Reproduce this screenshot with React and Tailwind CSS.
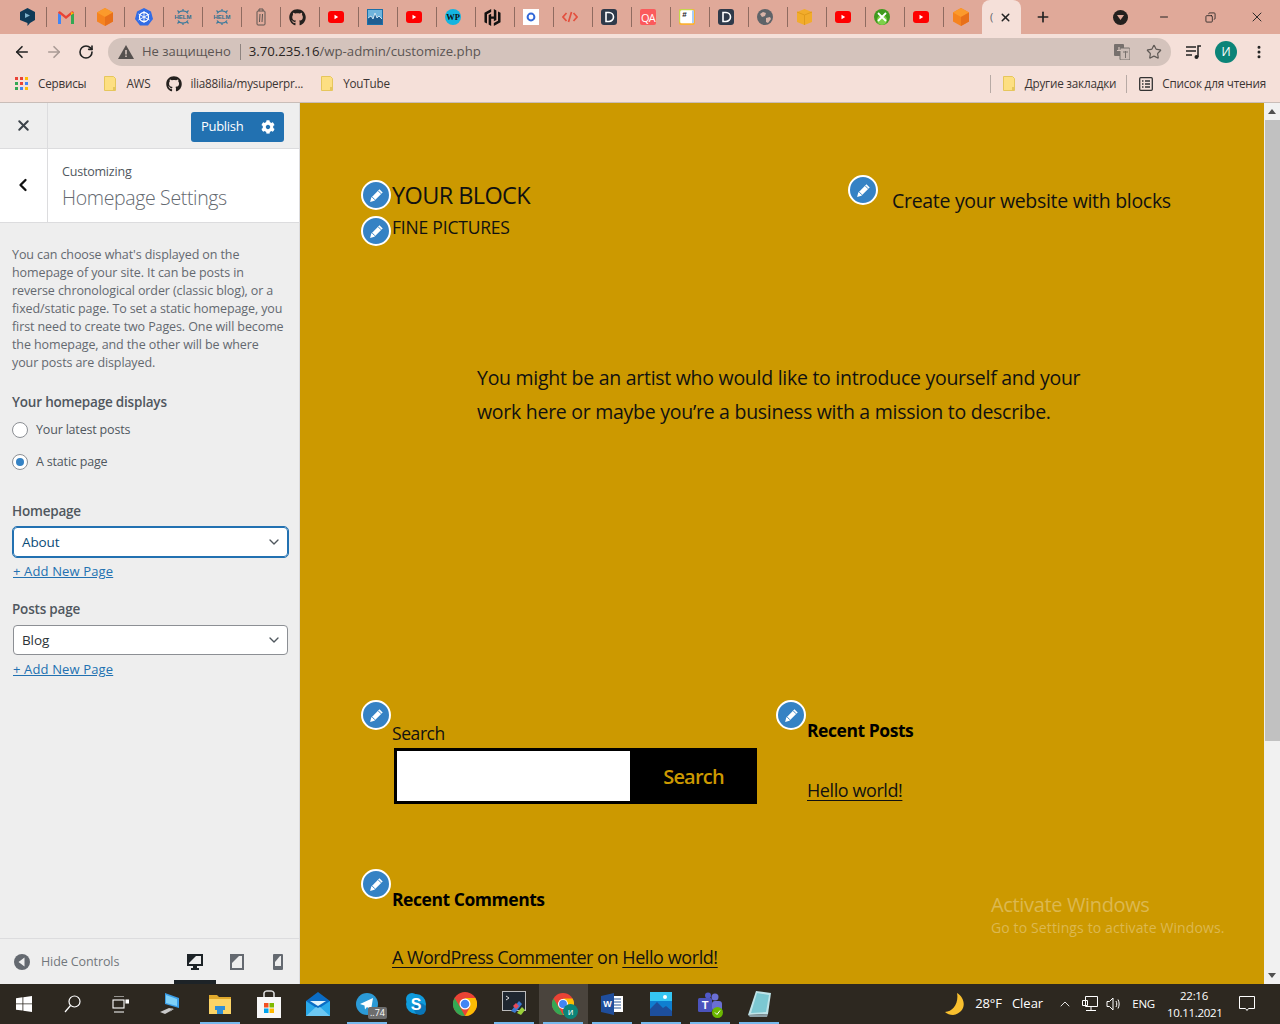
import React from 'react';
import { FaGithub, FaCog } from 'react-icons/fa';
import { SiHashicorp } from 'react-icons/si';
import { ArrowLeft, ArrowRight, RotateCw, Star, X, Plus, ChevronLeft, ChevronDown, ChevronUp, Minus, Copy, MoreVertical } from 'lucide-react';

const Yt = () => (
  <svg width="16" height="12" viewBox="0 0 16 12"><rect width="16" height="12" rx="3" fill="#f00" /><path d="M6.5 3.8v4.4L10.2 6z" fill="#fff" /></svg>
);
const Cube = () => (
  <svg width="16" height="18" viewBox="0 0 16 18"><path d="M8 0l8 4.5v9L8 18l-8-4.5v-9z" fill="#f5831f" /><path d="M8 0l8 4.5L8 9 0 4.5z" fill="#fb9a2c" /><path d="M8 9l8-4.5v9L8 18z" fill="#e8701a" /></svg>
);
const Helm = () => (
  <svg width="18" height="18" viewBox="0 0 18 18" fill="none" stroke="#3a7a9c" strokeWidth="1.200">
    <path d="M4 5.500a6 6 0 0 1 10 0M4 12.500a6 6 0 0 0 10 0M9 1v2.500M9 14.500V17M3.500 2.500l2 2.200M14.500 2.500l-2 2.200M3.500 15.500l2-2.200M14.500 15.500l-2-2.200" />
    <text x="9" y="11" textAnchor="middle" fontSize="6" fontWeight="700" fill="#2f6e90" stroke="none" fontFamily="Liberation Sans, sans-serif">HELM</text>
  </svg>
);
const DarkD = () => (
  <svg width="16" height="16" viewBox="0 0 16 16"><rect width="16" height="16" rx="3" fill="#2f3a4a" /><path d="M5 3.500h3a4.500 4.500 0 0 1 0 9H5z" fill="none" stroke="#fff" strokeWidth="1.600" /></svg>
);
const favicons = [
  <svg width="15" height="18" viewBox="0 0 15 18"><path d="M7.500 0L15 4v8l-5 3-2.500 3v-3L0 12V4z" fill="#0f3a57" /><path d="M5 5l5 2.500L5 10zM5 11l3-1" fill="#7fb2cc" /></svg>,
  <svg width="16" height="13" viewBox="0 0 16 13"><path d="M0 13V2l3 2v9z" fill="#4285f4" /><path d="M16 13V2l-3 2v9z" fill="#34a853" /><path d="M0 2c.5-2 2-2 3-1l5 4 5-4c1-1 2.500-1 3 1l-3 2-5 4-5-4z" fill="#ea4335" /><path d="M13 1l3 1-3 2z" fill="#fbbc04" /></svg>,
  <Cube />,
  <svg width="18" height="18" viewBox="0 0 18 18"><path d="M9 0l7 3.400L18 11l-5 6.500H5L0 11l2-7.600z" fill="#326ce5" /><circle cx="9" cy="9" r="4.500" fill="none" stroke="#fff" strokeWidth="1.300" /><path d="M9 3v12M3.500 6l11 6M14.500 6l-11 6" stroke="#fff" strokeWidth=".9" /></svg>,
  <Helm />,
  <Helm />,
  <svg width="10" height="18" viewBox="0 0 10 18" fill="none" stroke="#5c5450" strokeWidth="1"><rect x="1" y="3" width="8" height="14" rx="1" /><path d="M3 3V1h4v2M4 6l-.5 8M6.500 6L6 14" /></svg>,
  <FaGithub size={17} color="#24201e" />,
  <Yt />,
  <svg width="16" height="16" viewBox="0 0 16 16"><rect width="16" height="16" fill="#1b6fa8" /><rect x="1" y="1" width="14" height="14" fill="#6fb4dc" /><path d="M1 15V9l3-2 2 3 2-6 2 5 2-2 3 3v5z" fill="#1f5d91" /><path d="M1 9l3-2 2 3 2-6 2 5 2-2 3 3" fill="none" stroke="#e8f4fb" strokeWidth=".8" /></svg>,
  <Yt />,
  <svg width="16" height="16" viewBox="0 0 16 16"><circle cx="8" cy="8" r="8" fill="#14b4e0" /><text x="8" y="11" textAnchor="middle" fontSize="8.500" fontWeight="700" fill="#111" fontFamily="Liberation Serif, serif">WP</text></svg>,
  <SiHashicorp size={17} color="#111" />,
  <svg width="16" height="16" viewBox="0 0 16 16"><rect width="16" height="16" fill="#fff" /><circle cx="8" cy="8" r="3.400" fill="none" stroke="#3268d8" strokeWidth="2" /></svg>,
  <svg width="16" height="12" viewBox="0 0 16 12" fill="none" stroke="#e3503e" strokeWidth="1.700"><path d="M4.500 2L1 6l3.500 4M11.500 2L15 6l-3.500 4M9.500 1L6.500 11" /></svg>,
  <DarkD />,
  <div className="flex h-[16px] w-[16px] items-center justify-center rounded-[2px] bg-[#fb5a5c] font-['Open_Sans',sans-serif] text-[11px] leading-none tracking-[-0.8px] text-white">QA</div>,
  <svg width="16" height="16" viewBox="0 0 16 16"><rect width="16" height="16" rx="2" fill="#fbb034" /><rect x="0" y="0" width="14" height="14" rx="2" fill="#c5d84b" /><rect x="1.200" y="1.200" width="13.600" height="13" rx="1.500" fill="#fff" /><rect x="13" y="1.500" width="2" height="12.500" fill="#a7cdf6" /><text x="5.500" y="8" textAnchor="middle" fontSize="8" fontWeight="700" fill="#222" fontFamily="Liberation Sans, sans-serif">#</text></svg>,
  <DarkD />,
  <svg width="16" height="16" viewBox="0 0 16 16"><circle cx="8" cy="8" r="8" fill="#5f6368" /><path d="M3 5l3-2 3 1-1 3-3 1zM9 9l4-1 1 2-3 4-2-1z" fill="#d9b3a7" /></svg>,
  <svg width="15" height="16" viewBox="0 0 15 16"><path d="M7.500 0L15 3v10l-7.500 3L0 13V3z" fill="#f2ac2b" /><path d="M7.500 6v10" stroke="#e09a1c" /><path d="M0 3l7.500 3L15 3" fill="none" stroke="#e09a1c" /></svg>,
  <Yt />,
  <svg width="16" height="16" viewBox="0 0 16 16"><circle cx="8" cy="8" r="8" fill="#3f9a1f" /><circle cx="8" cy="11" r="5" fill="#7fd04a" /><path d="M4 4l8 8M12 4l-8 8" stroke="#fff" strokeWidth="1.800" /></svg>,
  <Yt />,
  <Cube />,
];

const EditBtn = ({ className }) => (
  <span className={`absolute flex h-[30px] w-[30px] items-center justify-center rounded-full border-2 border-white bg-[#3582c4] ${className}`}>
    <svg width="17" height="17" viewBox="0 0 16 16" fill="none"><path d="M10.800 2.200l3 3-7.800 7.800-4 1 1-4z" fill="#fff" /><path d="M9.600 3.600l2.800 2.800M4 9.500L6.500 12" stroke="#3582c4" strokeWidth=".9" /></svg>
  </span>
);

const Radio = ({ checked, label, className }) => (
  <div className={`flex items-center ${className}`}>
    <span className="flex h-[16px] w-[16px] items-center justify-center rounded-full border border-[#8c8f94] bg-white">
      {checked && <span className="h-[8px] w-[8px] rounded-full bg-[#3582c4]" />}
    </span>
    <span className="ml-[8px] text-[12.500px] leading-[16px] tracking-[-0.18px] text-[#50575e]">{label}</span>
  </div>
);

const SelectBox = ({ value, active }) => (
  <div className={`ml-[1px] flex h-[30px] w-[275px] items-center justify-between rounded-[4px] bg-white pl-[8px] pr-[5px] text-[13.500px] tracking-[-0.1px] ${active ? 'outline outline-1 outline-[#2271b1] border border-[#2271b1] text-[#0a4b78]' : 'border border-[#8c8f94] text-[#2c3338]'}`}>
    <span>{value}</span>
    <ChevronDown size={16} strokeWidth={2} color="#50575e" />
  </div>
);

const AddLink = ({ className }) => (
  <a className={`ml-[1px] block text-[13px] leading-[18px] tracking-[0.14px] text-[#2271b1] underline ${className}`}>+ Add New Page</a>
);

const sectionLabel = 'text-[13.500px] font-semibold leading-[18px] tracking-[-0.2px] text-[#50575e]';

const Sidebar = () => (
  <aside className="flex w-[300px] shrink-0 flex-col border-r border-[#dcdcde] bg-[#eeeeee] font-['Open_Sans',sans-serif]">
    <div className="flex h-[46px] shrink-0 items-center border-b border-[#dcdcde]">
      <div className="flex h-full w-[48px] items-center justify-center border-r border-[#dcdcde]">
        <X size={17} strokeWidth={2.800} color="#3c434a" />
      </div>
      <div className="ml-[143px] mt-[2px] flex h-[30px] w-[93px] items-center rounded-[3px] bg-[#2271b1] text-white">
        <span className="w-[63px] pl-[10px] pt-[1px] text-[13px] tracking-[-0.3px]">Publish</span>
        <FaCog size={14} color="#fff" className="ml-[7px]" />
      </div>
    </div>
    <div className="flex h-[74px] shrink-0 border-b border-[#dcdcde] bg-white">
      <div className="flex w-[48px] items-center justify-center border-r border-[#dcdcde] pb-[2px] pr-[1px]">
        <ChevronLeft size={20} strokeWidth={2.800} color="#111" />
      </div>
      <div className="pl-[14px] pt-[14px]">
        <div className="text-[12.500px] leading-[18px] tracking-[-0.2px] text-[#50575e]">Customizing</div>
        <div className="mt-[4px] text-[19.500px] font-light leading-[26px] tracking-[-0.35px] text-[#646970]">Homepage Settings</div>
      </div>
    </div>
    <div className="flex-1 px-[12px] pt-[23px]">
      <p className="w-[285px] text-[12.500px] leading-[18px] tracking-[-0.1px] text-[#646970]">
        You can choose what's displayed on the<br />homepage of your site. It can be posts in<br />reverse chronological order (classic blog), or a<br />fixed/static page. To set a static homepage, you<br />first need to create two Pages. One will become<br />the homepage, and the other will be where<br />your posts are displayed.
      </p>
      <div className={`mt-[21px] ${sectionLabel}`}>Your homepage displays</div>
      <Radio label="Your latest posts" className="mt-[11px]" />
      <Radio checked label="A static page" className="mt-[16px]" />
      <div className={`mt-[32px] ${sectionLabel}`}>Homepage</div>
      <div className="mt-[7px]"><SelectBox value="About" active /></div>
      <AddLink className="mt-[5px]" />
      <div className={`mt-[20px] ${sectionLabel}`}>Posts page</div>
      <div className="mt-[7px]"><SelectBox value="Blog" /></div>
      <AddLink className="mt-[5px]" />
    </div>
    <div className="relative flex h-[46px] shrink-0 items-center border-t border-[#dcdcde] pl-[14px] pt-[1px]">
      <span className="flex h-[16px] w-[16px] items-center justify-center rounded-full bg-[#646970]">
        <svg width="8" height="10" viewBox="0 0 8 10"><path d="M6.500 0.500v9L0.500 5z" fill="#eee" /></svg>
      </span>
      <span className="ml-[11px] text-[12.500px] tracking-[-0.1px] text-[#72777c]">Hide Controls</span>
      <svg className="absolute left-[187px] top-[15px]" width="16" height="16" viewBox="0 0 16 16"><path fillRule="evenodd" d="M0 0h16v12H10v2h2v2H4v-2h2v-2H0zM2 2v8h12V2z" fill="#1d2327" /><path d="M2 2h7L2 9z" fill="#1d2327" /></svg>
      <svg className="absolute left-[230px] top-[15px]" width="14" height="16" viewBox="0 0 14 16"><path fillRule="evenodd" d="M0 0h14v16H0zM2 2v12h10V2z" fill="#646970" /><path d="M2 2h7L2 9z" fill="#646970" /></svg>
      <svg className="absolute left-[273px] top-[15px]" width="10" height="16" viewBox="0 0 10 16"><path fillRule="evenodd" d="M0 1a1 1 0 0 1 1-1h8a1 1 0 0 1 1 1v14a1 1 0 0 1-1 1H1a1 1 0 0 1-1-1zM2 2v10h6V2z" fill="#646970" /><path d="M2 2h5L2 8z" fill="#646970" /></svg>
      <span className="absolute bottom-0 left-[174px] h-[4px] w-[42px] bg-[#1d2327]" />
    </div>
  </aside>
);

const linkCls = 'underline decoration-1 underline-offset-[3px]';

const Preview = () => (
  <main className="relative flex-1 overflow-hidden bg-[#cc9900] pl-[92px] pt-[76px] font-['Open_Sans',sans-serif] text-[#111]">
    <div className="flex">
      <div className="w-[500px]">
        <div className="relative text-[23.500px] leading-[32px] tracking-[-0.6px]">
          <EditBtn className="-left-[31px] top-[1px]" />YOUR BLOCK
        </div>
        <div className="relative mt-[2px] text-[17.500px] leading-[28px] tracking-[-0.2px]">
          <EditBtn className="-left-[31px] top-[3px]" />FINE PICTURES
        </div>
      </div>
      <div className="relative mt-[6px] h-[32px] text-[19.500px] leading-[32px] tracking-[-0.3px]">
        <EditBtn className="-left-[44px] -top-[10px]" />Create your website with blocks
      </div>
    </div>
    <p className="ml-[85px] mt-[120px] text-[19.500px] leading-[34px] tracking-[-0.27px]">
      You might be an artist who would like to introduce yourself and your<br />work here or maybe you’re a business with a mission to describe.
    </p>
    <div className="mt-[289px] flex">
      <div className="w-[415px]">
        <div className="relative text-[17.500px] leading-[30px] tracking-[-0.42px]">
          <EditBtn className="-left-[31px] -top-[18px]" />Search
        </div>
        <div className="ml-[2px] flex h-[56px] w-[363px] border-[3px] border-black bg-black">
          <div className="w-[233px] bg-white" />
          <div className="flex-1 pl-[3px] text-center text-[20px] font-semibold leading-[51px] tracking-[-0.8px] text-[#cc9900]">Search</div>
        </div>
      </div>
      <div>
        <div className="relative text-[17.500px] font-bold leading-[24px] tracking-[-0.45px] text-black">
          <EditBtn className="-left-[31px] -top-[18px]" />Recent Posts
        </div>
        <div className="mt-[34px] text-[18px] leading-[28px] tracking-[-0.42px]"><a className={linkCls}>Hello world!</a></div>
      </div>
    </div>
    <div className="relative mt-[83px] text-[17.500px] font-bold leading-[24px] tracking-[-0.45px] text-black">
      <EditBtn className="-left-[31px] -top-[18px]" />Recent Comments
    </div>
    <div className="mt-[32px] text-[18px] leading-[28px] tracking-[-0.42px]">
      <a className={`${linkCls} tracking-[-0.56px]`}>A WordPress Commenter</a> on <a className={linkCls}>Hello world!</a>
    </div>
    <div className="absolute left-[691px] top-[788px] text-[#dcb850]">
      <div className="text-[20px] leading-[28px] tracking-[-0.35px]">Activate Windows</div>
      <div className="text-[14px] leading-[18px] tracking-[0.12px]">Go to Settings to activate Windows.</div>
    </div>
  </main>
);

const Scrollbar = () => (
  <div className="flex w-[16px] shrink-0 flex-col items-center bg-[#f1f1f1]">
    <div className="flex h-[17px] items-center justify-center"><svg width="8" height="5" viewBox="0 0 8 5"><path d="M4 0l4 5H0z" fill="#505050" /></svg></div>
    <div className="h-[621px] w-[15px] bg-[#c1c1c1]" />
    <div className="flex-1" />
    <div className="flex h-[17px] items-center justify-center"><svg width="8" height="5" viewBox="0 0 8 5"><path d="M4 5l4-5H0z" fill="#505050" /></svg></div>
  </div>
);

const TabStrip = () => (
  <div className="flex h-[34px] shrink-0 items-center bg-[#e0a999] pl-[8px] font-['Open_Sans',sans-serif]">
    {favicons.map((ic, i) => (
      <div key={i} className={`flex h-[20px] w-[39px] shrink-0 items-center justify-center ${i < favicons.length - 1 ? 'border-r border-[#8f6b60]' : ''} ${i >= 7 ? 'pr-[6px]' : ''}`}>{ic}</div>
    ))}
    <div className="-ml-[1px] flex h-[34px] w-[39px] shrink-0 items-center rounded-t-[8px] bg-[#f5e0d9] pl-[8px]">
      <span className="text-[11px] text-[#5f6368]">(</span>
      <X size={13} strokeWidth={2.800} color="#222" className="ml-[6px]" />
    </div>
    <Plus size={16} strokeWidth={2.500} color="#222" className="ml-[14px]" />
    <span className="ml-[62px] flex h-[15px] w-[15px] items-center justify-center rounded-full bg-[#24201e]">
      <svg width="7" height="5" viewBox="0 0 7 5"><path d="M0 0h7L3.500 5z" fill="#e0a999" /></svg>
    </span>
    <Minus size={12} strokeWidth={2} color="#222" className="ml-[30px]" />
    <Copy size={11} strokeWidth={1.800} color="#222" className="ml-[35px] -scale-x-100" />
    <X size={16} strokeWidth={1.400} color="#222" className="ml-[33px]" />
  </div>
);

const Toolbar = () => (
  <div className="flex h-[36px] shrink-0 items-center bg-[#f5e0d9] font-['Open_Sans',sans-serif]">
    <ArrowLeft size={18} strokeWidth={2.200} color="#222" className="ml-[13px]" />
    <ArrowRight size={18} strokeWidth={2.200} color="#a99a95" className="ml-[14px]" />
    <RotateCw size={16} strokeWidth={2.400} color="#222" className="ml-[15px]" />
    <div className="ml-[14px] flex h-[28px] w-[1063px] items-center rounded-full bg-[#d4c3bc] pl-[10px]">
      <svg width="16" height="14" viewBox="0 0 16 14"><path d="M8 0l8 14H0z" fill="#55504e" /><path d="M7.200 5h1.600v4.500H7.200zM7.200 10.500h1.600V12H7.200z" fill="#d4c3bc" /></svg>
      <span className="ml-[8px] text-[13px] text-[#5b5553]">Не защищено</span>
      <span className="ml-[9px] h-[16px] w-px bg-[#8e8480]" />
      <span className="ml-[8px] text-[13.200px] text-[#5b5553]"><span className="text-[#2a2523]">3.70.235.16</span>/wp-admin/customize.php</span>
      <svg className="ml-auto" width="16" height="16" viewBox="0 0 16 16"><rect x="0" y="0" width="10" height="12" rx="1" fill="#77706d" /><rect x="6" y="4" width="10" height="12" rx="1" fill="#cbbcb6" stroke="#77706d" /><path d="M3 6.500h4M5 3v4" stroke="#d4c3bc" strokeWidth="1.200" /><path d="M9 8h5M11.500 7v7" stroke="#77706d" /></svg>
      <Star size={16} strokeWidth={1.800} color="#5f5955" className="ml-[16px] mr-[9px]" />
    </div>
    <svg className="ml-[15px]" width="15" height="14" viewBox="0 0 15 14"><path d="M0 2h10M0 6h10M0 10h6" stroke="#222" strokeWidth="1.500" /><path d="M12 12V1h3" stroke="#222" strokeWidth="1.500" fill="none" /><circle cx="10.500" cy="12" r="2" fill="#222" /></svg>
    <span className="ml-[14px] flex h-[22px] w-[22px] items-center justify-center rounded-full bg-[#0b8478] text-[12px] text-white">И</span>
    <MoreVertical size={16} strokeWidth={2.500} color="#222" className="ml-[14px]" />
  </div>
);

const Folder = ({ className }) => (
  <svg className={className} width="12" height="15" viewBox="0 0 12 15"><path d="M0.500 0.500h9l2 2v12h-11z" fill="#fddf82" stroke="#e6c65c" /><rect x="9" y="11" width="2" height="3" fill="#e6c65c" /></svg>
);

const Bookmarks = () => (
  <div className="flex h-[33px] shrink-0 items-center border-b border-[#c9bdb8] bg-[#f5e0d9] pb-[5px] pl-[15px] font-['Open_Sans',sans-serif] text-[11.700px] tracking-[-0.2px] text-[#3b3533]">
    <svg width="13" height="13" viewBox="0 0 13 13">
      {[['#ea4335', '#ea4335', '#fbbc04'], ['#34a853', '#ea4335', '#4285f4'], ['#34a853', '#4285f4', '#fbbc04']].flatMap((row, y) => row.map((c, x) => <rect key={`${x}${y}`} x={x * 5} y={y * 5} width="3" height="3" fill={c} />))}
    </svg>
    <span className="ml-[10px]">Сервисы</span>
    <Folder className="ml-[18px]" />
    <span className="ml-[10px]">AWS</span>
    <FaGithub size={16} color="#24201e" className="ml-[16px]" />
    <span className="ml-[8px]">ilia88ilia/mysuperpr...</span>
    <Folder className="ml-[18px]" />
    <span className="ml-[10px]">YouTube</span>
    <span className="ml-auto h-[18px] w-px bg-[#b7aaa5]" />
    <Folder className="ml-[12px]" />
    <span className="ml-[10px]">Другие закладки</span>
    <span className="ml-[10px] h-[18px] w-px bg-[#b7aaa5]" />
    <svg className="ml-[12px]" width="14" height="14" viewBox="0 0 14 14" fill="none" stroke="#333" strokeWidth="1.300"><rect x=".7" y=".7" width="12.600" height="12.600" rx="1" /><path d="M3 4h1.500M6 4h5M3 7h1.500M6 7h5M3 10h1.500M6 10h5" /></svg>
    <span className="ml-[9px] mr-[14px]">Список для чтения</span>
  </div>
);

const ChromeLogo = ({ size }) => (
  <svg width={size} height={size} viewBox="0 0 24 24"><circle cx="12" cy="12" r="12" fill="#ea4335" /><path d="M12 24a12 12 0 0 1-10.400-18L7 15l5 9z" fill="#34a853" /><path d="M12 6h10.400A12 12 0 0 1 12 24l5-9z" fill="#fbbc04" /><circle cx="12" cy="12" r="5.500" fill="#fff" /><circle cx="12" cy="12" r="4.300" fill="#4285f4" /></svg>
);

const tbIcons = [
  <svg width="26" height="24" viewBox="0 0 26 24"><path d="M7 1l14 5v10L7 12z" fill="#3a9ee8" /><path d="M8 3l11 4v7L8 11z" fill="#7fd0f7" /><path d="M2 20l9-4 5 1-9 5z" fill="#c9c9c9" /><path d="M14 16v2l-2 1" stroke="#999" fill="none" /></svg>,
  <svg width="22" height="20" viewBox="0 0 22 20"><path d="M0 1h8l2 2h12v3H0z" fill="#e0a92c" /><path d="M0 5h22v15H0z" fill="#fbd466" /><path d="M6 16v-4h10v4h-2v4H8v-4z" fill="#2f8fd8" /></svg>,
  <svg width="24" height="28" viewBox="0 0 24 28"><path d="M7 7V3a3 3 0 0 1 3-2h4a3 3 0 0 1 3 2v4" fill="none" stroke="#ddd" strokeWidth="1.600" /><rect y="7" width="24" height="21" fill="#f7f7f7" /><rect x="7" y="13" width="4.500" height="4.500" fill="#f25022" /><rect x="12.500" y="13" width="4.500" height="4.500" fill="#7fba00" /><rect x="7" y="18.500" width="4.500" height="4.500" fill="#00a4ef" /><rect x="12.500" y="18.500" width="4.500" height="4.500" fill="#ffb900" /></svg>,
  <svg width="24" height="24" viewBox="0 0 24 24"><path d="M0 9L12 0l12 9v15H0z" fill="#0a6cc4" /><path d="M0 9l12 8 12-8v15H0z" fill="#29a9ea" /><path d="M4 9h16l-8 5z" fill="#e0f2fc" /><path d="M0 24l10-9 2 1 2-1 10 9z" fill="#6dc8f3" /></svg>,
  <div className="relative"><svg width="22" height="22" viewBox="0 0 22 22"><circle cx="11" cy="11" r="11" fill="#2b9ad6" /><path d="M4 11l13-6-2 12-4-3-2 2.500-.5-4z" fill="#fff" /></svg><span className="absolute -right-[9px] top-[14px] rounded-[2px] bg-[#6d6d6d] px-[2px] font-['Open_Sans',sans-serif] text-[9px] leading-[12px] text-white">..74</span></div>,
  <svg width="22" height="24" viewBox="0 0 22 24"><circle cx="11" cy="12" r="10" fill="#0f9bdc" /><circle cx="7" cy="7" r="6" fill="#0f9bdc" /><circle cx="15" cy="17" r="6" fill="#0a76b8" /><text x="11" y="18" textAnchor="middle" fontSize="16" fontWeight="700" fill="#fff" fontFamily="Liberation Sans, sans-serif">S</text></svg>,
  <ChromeLogo size={24} />,
  <svg width="24" height="26" viewBox="0 0 24 26"><rect width="24" height="20" fill="#bbb" /><rect x="1" y="1" width="22" height="18" fill="#1f2730" /><path d="M4 5l3 2-3 2" stroke="#ddd" fill="none" /><path d="M9 20l8-10 3 3-7 9z" fill="#3a78d0" /><path d="M15 22l5-6 3 3-4 5z" fill="#9ad03a" /><path d="M11 15l3-3 3 3-3 3z" fill="#e84a5a" /></svg>,
  <div className="relative"><ChromeLogo size={22} /><span className="absolute -bottom-[4px] -right-[4px] flex h-[15px] w-[15px] items-center justify-center rounded-full bg-[#0b8478] font-['Open_Sans',sans-serif] text-[9px] text-white">и</span></div>,
  <svg width="22" height="22" viewBox="0 0 22 22"><rect x="9" y="3" width="13" height="16" fill="#fff" /><path d="M12 6h8M12 9h8M12 12h8M12 15h8" stroke="#2b5797" /><path d="M0 3l13-3v22L0 19z" fill="#1f4e9c" /><text x="6.500" y="14" textAnchor="middle" fontSize="9" fontWeight="700" fill="#fff" fontFamily="Liberation Sans, sans-serif">W</text></svg>,
  <svg width="22" height="24" viewBox="0 0 22 24"><rect width="22" height="24" fill="#0f7fd0" /><rect width="22" height="9" fill="#35c6f3" /><circle cx="15" cy="5" r="2" fill="#fff" /><path d="M0 24V17l7-7 6 6 3-2 6 5v5z" fill="#1d4f9c" /></svg>,
  <div className="relative"><svg width="24" height="24" viewBox="0 0 24 24"><circle cx="17" cy="5" r="3.500" fill="#6a6fd3" /><circle cx="10" cy="3.500" r="3" fill="#5059c9" /><rect x="14" y="9" width="10" height="10" rx="3" fill="#6a6fd3" /><rect x="0" y="6" width="14" height="14" rx="1.500" fill="#4b53bc" /><text x="7" y="17" textAnchor="middle" fontSize="11" fontWeight="700" fill="#fff" fontFamily="Liberation Sans, sans-serif">T</text></svg><span className="absolute -bottom-[2px] -right-[1px] flex h-[11px] w-[11px] items-center justify-center rounded-full bg-[#6bb700]"><svg width="7" height="7" viewBox="0 0 7 7"><path d="M1 3.500l2 2 3-4" stroke="#fff" fill="none" /></svg></span></div>,
  <svg width="23" height="26" viewBox="0 0 23 26"><path d="M8 0l15 2-3 21L0 24z" fill="#bfe3e8" /><path d="M9 2l12 2-3 17L3 22z" fill="#7cc8d2" /><path d="M0 24l20-1-1 3H2z" fill="#8a9ea5" /></svg>,
];

const Taskbar = () => (
  <div className="flex h-[40px] shrink-0 items-stretch bg-[#2d2820] font-['Open_Sans',sans-serif] text-[13px] text-white">
    <div className="flex w-[48px] items-center justify-center">
      <svg width="16" height="16" viewBox="0 0 16 16" fill="#fff"><path d="M0 2.200l6.500-.9v6.200H0zM7.300 1.200L16 0v7.500H7.300zM0 8.300h6.500v6.300L0 13.800zM7.300 8.300H16V16l-8.700-1.200z" /></svg>
    </div>
    <div className="flex w-[48px] items-center justify-center">
      <svg width="17" height="18" viewBox="0 0 17 18" fill="none" stroke="#fff" strokeWidth="1.200"><circle cx="10.500" cy="6.500" r="5.500" /><path d="M6.500 10.500L1 17" /></svg>
    </div>
    <div className="mr-[2.500px] flex w-[48px] items-center justify-center">
      <svg width="17" height="17" viewBox="0 0 17 17" fill="none" stroke="#fff" strokeWidth="1.100"><path d="M2 0h10M2 16h10" /><rect x="1" y="4" width="11" height="8" /><rect x="14" y="4" width="2.500" height="3" fill="#fff" /></svg>
    </div>
    {tbIcons.map((ic, i) => (
      <div key={i} className={`relative flex w-[49px] items-center justify-center ${i === 8 ? 'bg-[#4a443d]' : ''}`}>
        {ic}
        {[1, 4, 7, 8, 9, 10, 11, 12].includes(i) && <span className="absolute bottom-0 left-[4.500px] right-[4.500px] h-[2px] bg-[#76b9ed]" />}
      </div>
    ))}
    <div className="ml-auto flex items-center">
      <svg width="21" height="22" viewBox="0 0 21 22"><path d="M12 0C22 6 21 20 8 22 5 22 2 21 0 19 8 19 14 10 12 0z" fill="#f9c02e" /></svg>
      <span className="ml-[9px] tracking-[-0.1px]">28°F</span>
      <span className="ml-[10px]">Clear</span>
      <ChevronUp size={16} strokeWidth={1.300} color="#fff" className="ml-[14px]" />
      <svg className="ml-[9px]" width="16" height="16" viewBox="0 0 16 16" fill="none" stroke="#fff"><path d="M3.500 .5h12v10H3.500zM.5 4.500h5v5h-5zM9 11v3M4 14.500h10" /></svg>
      <svg className="ml-[8px]" width="16" height="16" viewBox="0 0 16 16" fill="none" stroke="#fff"><path d="M1 5.500h2.500L7 2v12l-3.500-3.500H1zM10 5c1 2 1 4 0 6M12 3.500c1.500 3 1.500 6 0 9" /></svg>
      <span className="ml-[10px] text-[11.500px] tracking-[-0.2px]">ENG</span>
      <div className="ml-[12px] -mt-[1px] w-[54px] text-center text-[11.500px] leading-[17px] tracking-[-0.3px]">22:16<br />10.11.2021</div>
      <svg className="ml-[18px] mr-[25px]" width="16" height="16" viewBox="0 0 16 16" fill="none" stroke="#fff"><path d="M.5 .5h15v12H9.500l-1.500 2-1.500-2H.5z" /></svg>
    </div>
  </div>
);

export default function App() {
  return (
    <div className="flex h-[1024px] w-[1280px] flex-col overflow-hidden">
      <TabStrip />
      <Toolbar />
      <Bookmarks />
      <div className="flex min-h-0 flex-1">
        <Sidebar />
        <Preview />
        <Scrollbar />
      </div>
      <Taskbar />
    </div>
  );
}
